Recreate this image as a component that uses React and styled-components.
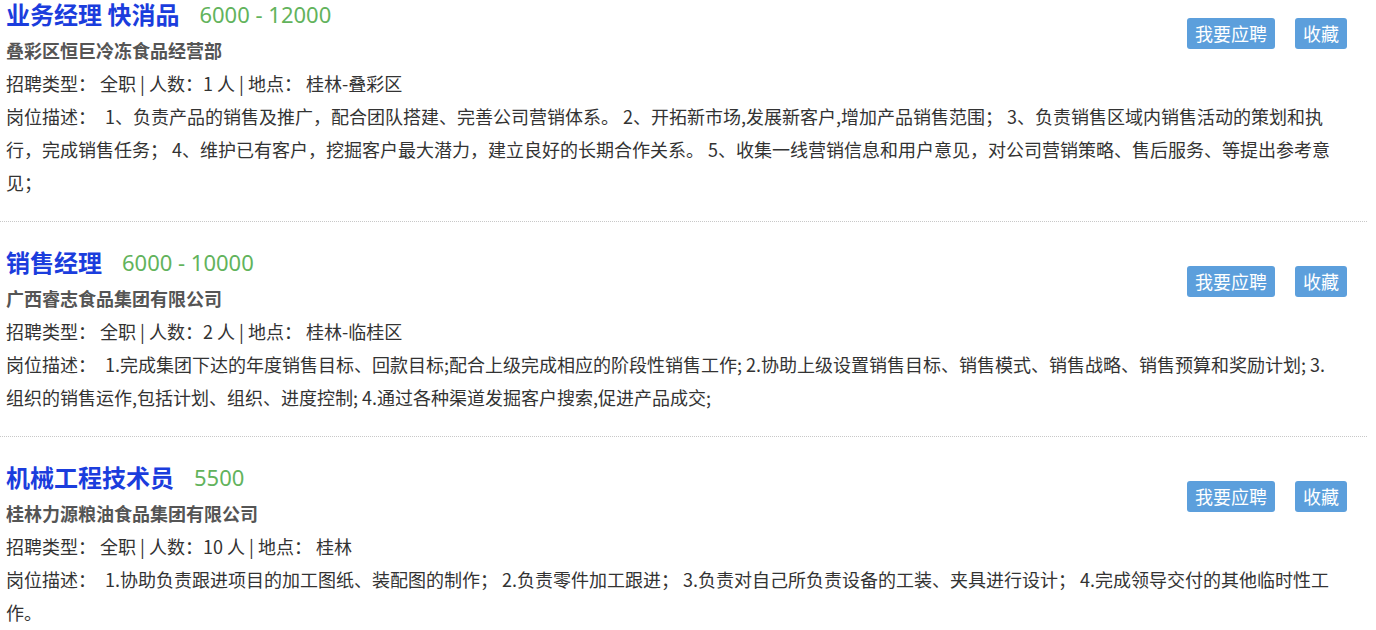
import React from "react";
import styled, { createGlobalStyle } from "styled-components";

const GlobalStyle = createGlobalStyle`
  body {
    margin: 0;
    background: #fff;
    font-family: "Noto Sans CJK SC", "Noto Sans", sans-serif;
    color: #333;
  }
`;

const List = styled.div`
  width: 1367px;
`;

const Item = styled.div`
  padding: ${(p) => (p.first ? "0" : "26px")} 29px 22px 6px;
  border-bottom: ${(p) => (p.last ? "none" : "1px dotted #c8c8c8")};
  &::after {
    content: "";
    display: block;
    clear: both;
  }
`;

const Actions = styled.div`
  float: right;
  display: flex;
  gap: 20px;
  margin: 18px -9px 0 0;
`;

const Button = styled.button`
  height: 31px;
  padding: 0 8px;
  border: none;
  border-radius: 3px;
  background: #5c9fdc;
  color: #fff;
  font-family: inherit;
  font-size: 18px;
  line-height: 31px;
  cursor: pointer;
`;

const TitleRow = styled.div`
  display: flex;
  align-items: center;
  gap: 20px;
  height: 28px;
  margin-bottom: 6px;
  line-height: 28px;
`;

const JobName = styled.span`
  font-size: 24px;
  font-weight: bold;
  color: #1b3ddd;
`;

const Salary = styled.span`
  font-family: "Noto Sans", sans-serif;
  font-size: 22px;
  color: #62b35c;
`;

const Company = styled.div`
  font-size: 18px;
  font-weight: bold;
  color: #555;
  line-height: 33px;
`;

const Line = styled.div`
  font-size: 18px;
  line-height: 33px;
  color: #333;
`;

const Label = styled.span`
  margin-right: 9px;
`;

const jobs = [
  {
    name: "业务经理 快消品",
    salary: "6000 - 12000",
    company: "叠彩区恒巨冷冻食品经营部",
    count: 1,
    place: "桂林-叠彩区",
    desc: "1、负责产品的销售及推广，配合团队搭建、完善公司营销体系。 2、开拓新市场,发展新客户,增加产品销售范围； 3、负责销售区域内销售活动的策划和执行，完成销售任务； 4、维护已有客户，挖掘客户最大潜力，建立良好的长期合作关系。 5、收集一线营销信息和用户意见，对公司营销策略、售后服务、等提出参考意见；",
  },
  {
    name: "销售经理",
    salary: "6000 - 10000",
    company: "广西睿志食品集团有限公司",
    count: 2,
    place: "桂林-临桂区",
    desc: "1.完成集团下达的年度销售目标、回款目标;配合上级完成相应的阶段性销售工作; 2.协助上级设置销售目标、销售模式、销售战略、销售预算和奖励计划; 3.组织的销售运作,包括计划、组织、进度控制; 4.通过各种渠道发掘客户搜索,促进产品成交;",
  },
  {
    name: "机械工程技术员",
    salary: "5500",
    company: "桂林力源粮油食品集团有限公司",
    count: 10,
    place: "桂林",
    desc: "1.协助负责跟进项目的加工图纸、装配图的制作； 2.负责零件加工跟进； 3.负责对自己所负责设备的工装、夹具进行设计； 4.完成领导交付的其他临时性工作。",
  },
];

export default function App() {
  return (
    <>
      <GlobalStyle />
      <List>
        {jobs.map((job, i) => (
          <Item key={job.name} first={i === 0} last={i === jobs.length - 1}>
            <Actions>
              <Button>我要应聘</Button>
              <Button>收藏</Button>
            </Actions>
            <TitleRow>
              <JobName>{job.name}</JobName>
              <Salary>{job.salary}</Salary>
            </TitleRow>
            <Company>{job.company}</Company>
            <Line>
              招聘类型： 全职 | 人数：{job.count} 人 | 地点： {job.place}
            </Line>
            <Line>
              <Label>岗位描述：</Label>
              {job.desc}
            </Line>
          </Item>
        ))}
      </List>
    </>
  );
}
